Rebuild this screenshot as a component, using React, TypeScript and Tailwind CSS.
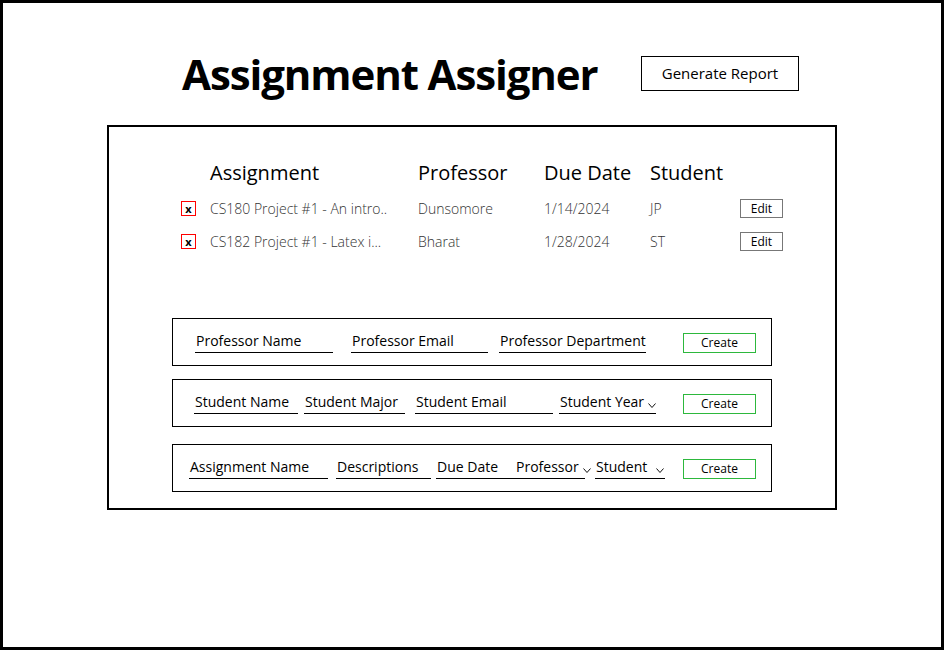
const rows = [
  { name: 'CS180 Project #1 - An intro..', prof: 'Dunsomore', due: '1/14/2024', student: 'JP' },
  { name: 'CS182 Project #1 - Latex i...', prof: 'Bharat', due: '1/28/2024', student: 'ST' },
];

function Chevron() {
  return (
    <svg width="8" height="5" viewBox="0 0 8 5" fill="none" className="mb-[4px] ml-auto shrink-0">
      <path d="M0.5 0.5 L4 4.5 L7.5 0.5" stroke="#111" strokeWidth="1" />
    </svg>
  );
}

function Field({ label, width, chevron }: { label: string; width: string; chevron?: boolean }) {
  return (
    <div className={`${width} flex items-end gap-[4px] border-b border-black pl-[1px] pr-[1px] pb-[1px] leading-[20px] whitespace-nowrap`}>
      <span>{label}</span>
      {chevron && <Chevron />}
    </div>
  );
}

function CreateButton() {
  return (
    <button className="w-[73px] h-[20px] border border-[#2db83d] text-[12px] leading-none text-black">
      Create
    </button>
  );
}

export default function App() {
  return (
    <div className="w-[944px] h-[650px] box-border border-[3px] border-black bg-white font-['Open_Sans',sans-serif] text-black">
      {/* header */}
      <div className="flex items-center pl-[179px] pt-[44px] h-[98px]">
        <h1 className="text-[42px] font-bold leading-none tracking-[-1.1px] w-[459px]">Assignment Assigner</h1>
        <button className="w-[158px] h-[35px] -mt-[2px] border border-black text-[15px]">Generate Report</button>
      </div>

      {/* main panel */}
      <div className="ml-[104px] mt-[24px] w-[730px] h-[385px] border-2 border-black box-border">
        {/* table */}
        <div className="pt-[32px] pl-[72px]">
          <div className="flex text-[20px] leading-[28px] pl-[29px]">
            <div className="w-[208px]">Assignment</div>
            <div className="w-[126px]">Professor</div>
            <div className="w-[106px]">Due Date</div>
            <div>Student</div>
          </div>
          <div className="mt-[12px] flex flex-col gap-[14px]">
            {rows.map((r) => (
              <div key={r.name} className="flex items-center h-[19px] text-[14px] font-light text-[#333]">
                <div className="relative w-[15px] h-[15px] shadow-[inset_0_0_0_1px_#ff0000] flex items-center justify-center text-[11px] font-bold text-black leading-none">
                  x
                </div>
                <div className="w-[208px] ml-[14px] truncate">{r.name}</div>
                <div className="w-[126px]">{r.prof}</div>
                <div className="w-[106px]">{r.due}</div>
                <div className="w-[90px]">{r.student}</div>
                <button className="w-[43px] h-[19px] border border-[#777] text-[12px] font-normal text-black leading-none">Edit</button>
              </div>
            ))}
          </div>
        </div>

        {/* forms */}
        <div className="ml-[63px] mt-[67px] flex flex-col w-[600px] text-[14px]">
          <div className="h-[48px] border border-black flex items-center pl-[22px] pr-[15px]">
            <div className="flex gap-[18px] items-end">
              <Field label="Professor Name" width="w-[138px]" />
              <Field label="Professor Email" width="w-[137px]" />
              <Field label="Professor Department" width="w-[147px] -ml-[7px]" />
            </div>
            <div className="ml-auto"><CreateButton /></div>
          </div>
          <div className="mt-[13px] h-[48px] border border-black flex items-center pl-[21px] pr-[15px]">
            <div className="flex gap-[8px] items-end">
              <Field label="Student Name" width="w-[104px]" />
              <Field label="Student Major" width="w-[101px] -ml-[2px]" />
              <Field label="Student Email" width="w-[138px] ml-[2px]" />
              <Field label="Student Year" width="w-[97px] -ml-[2px]" chevron />
            </div>
            <div className="ml-auto"><CreateButton /></div>
          </div>
          <div className="mt-[17px] h-[48px] border border-black flex items-center pl-[16px] pr-[15px]">
            <div className="flex gap-[8px] items-end">
              <Field label="Assignment Name" width="w-[139px]" />
              <Field label="Descriptions" width="w-[95px]" />
              <Field label="Due Date" width="w-[92px] -ml-[3px]" />
              <Field label="Professor" width="w-[70px] -ml-[21px]" chevron />
              <Field label="Student" width="w-[70px] ml-[2px]" chevron />
            </div>
            <div className="ml-auto"><CreateButton /></div>
          </div>
        </div>
      </div>
    </div>
  );
}
